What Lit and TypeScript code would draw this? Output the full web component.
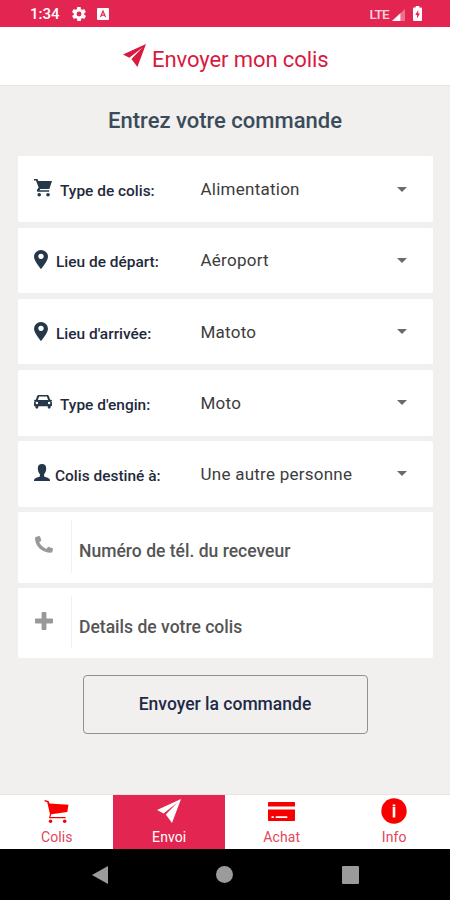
import { LitElement, html, css, svg } from "lit";
import { customElement, property } from "lit/decorators.js";

const plane = svg`<path d="M24 0 0 11l6.600 3.400L20.400 3.600 8.800 15.600 15 24z"/>`;

const icons: Record<string, { box: string; body: unknown }> = {
  plane: { box: "0 0 24 24", body: plane },
  cart: {
    box: "0 0 19 19",
    body: svg`<path d="M0 0h3.600l.9 2H19l-2.800 8.500H6.700l-.9 1.400H16v1.500H4.200c-1.200 0-1.600-1-1-2l1.700-2.500L2.100 1.500H0z"/><circle cx="5.500" cy="16.600" r="1.900"/><circle cx="14.800" cy="16.600" r="1.900"/>`,
  },
  pin: {
    box: "0 0 14 20",
    body: svg`<path fill-rule="evenodd" d="M7 0a7 7 0 0 0-7 7c0 4.600 7 13 7 13s7-8.400 7-13a7 7 0 0 0-7-7zm0 4a2.700 2.700 0 1 1 0 5.400A2.700 2.700 0 0 1 7 4z"/>`,
  },
  car: {
    box: "0 0 19 15",
    body: svg`<path fill-rule="evenodd" d="M5.300 0h8.400c1.300 0 1.900.7 2.300 1.900L17 5h1.500c.7.600.5 1.500-.3 1.500.5.700.8 1.300.8 2.100V11c0 .6-.4 1-1 1h-.5v1.200c0 2-3 2-3 0V12h-10v1.200c0 2-3 2-3 0V12H1c-.6 0-1-.4-1-1V8.600c0-.8.300-1.400.8-2.100C0 6.500-.2 5.600.5 5H2l1-3.100C3.400.7 4 0 5.300 0zm.1 1.700L4.100 5.300h10.800l-1.300-3.600zM3 7.200a1.300 1.300 0 1 0 0 2.600 1.300 1.300 0 0 0 0-2.600zm13 0a1.300 1.300 0 1 0 0 2.600 1.300 1.300 0 0 0 0-2.600z"/>`,
  },
  person: {
    box: "0 0 16 17",
    body: svg`<path d="M8 0c2.700 0 4.200 1.500 4.200 4.300 0 2.600-.8 4.600-2.100 5.900v2.200c2.700.9 5.200 1.600 5.900 3.300V17H0v-1.300c.7-1.700 3.200-2.400 5.900-3.300v-2.200C4.600 8.900 3.800 6.900 3.800 4.300 3.800 1.500 5.300 0 8 0z"/>`,
  },
  phone: {
    box: "0 0 18 18",
    body: svg`<path d="M1.500.7 3.900 0c.5-.1.900.1 1.100.5L6.200 4c.2.500.1.900-.2 1.200L4.200 6.700c1.400 2.900 3.900 5.500 7 7l1.600-1.800c.3-.4.800-.5 1.200-.3l3.500 1.500c.4.200.6.600.5 1.100l-.7 2.400c-.2.700-.7 1.100-1.400 1.100C7 17.700 0 10.600 0 2.300 0 1.400.6.900 1.500.7z"/>`,
  },
  plus: {
    box: "0 0 18 18",
    body: svg`<path d="M7.500 0h3c.6 0 .9.400.9.900v5.700h5.700c.5 0 .9.400.9.900v3c0 .5-.4.900-.9.900h-5.700v5.700c0 .5-.4.900-.9.900h-3c-.5 0-.9-.4-.9-.9v-5.700H.9c-.5 0-.9-.4-.9-.9v-3c0-.5.4-.9.900-.9h5.700V.9c0-.5.4-.9.900-.9z"/>`,
  },
  trolley: {
    box: "0 0 26 24",
    body: svg`<path d="M.8 0 4.800 1 5.800 3.600 25.500 5 24.200 12.500 7.500 14.800l-.8 3h15.800v1.300H5.200l1-4.500L3.400 2.300.3 1.300z"/><circle cx="6.800" cy="22.200" r="1.800"/><circle cx="21.500" cy="22.200" r="1.800"/>`,
  },
  card: {
    box: "0 0 27 19",
    body: svg`<path fill-rule="evenodd" d="M1 0h25c.6 0 1 .4 1 1v3.400H0V1c0-.6.400-1 1-1zM0 7.600h27V18c0 .6-.4 1-1 1H1c-.6 0-1-.4-1-1zm3.500 6.600V16h2.300v-1.800zm4.200 0V16h11.600v-1.800z"/>`,
  },
  info: {
    box: "0 0 26 26",
    body: svg`<circle cx="13" cy="13" r="12.700"/><path fill="#fff" d="M11.700 6.400h2.600v1.900h-2.600zM11.700 9h2.600v10.400h-2.600z"/>`,
  },
  gear: {
    box: "2 2 20 20",
    body: svg`<path d="M19.400 13c0-.3.100-.6.100-1s0-.7-.1-1l2.100-1.600c.2-.2.200-.4.100-.6l-2-3.500c-.1-.2-.4-.3-.6-.2l-2.500 1c-.5-.4-1.100-.7-1.700-1l-.4-2.600c0-.3-.2-.5-.5-.5h-4c-.2 0-.5.200-.5.400l-.4 2.700c-.6.200-1.100.6-1.700 1l-2.500-1c-.2-.1-.5 0-.6.200l-2 3.500c-.1.200-.1.500.1.600L4.600 11c0 .3-.1.600-.1 1s0 .7.100 1l-2.100 1.600c-.2.200-.2.400-.1.600l2 3.500c.1.200.4.300.6.200l2.500-1c.5.400 1.100.7 1.700 1l.4 2.600c0 .2.200.5.500.5h4c.2 0 .5-.2.500-.5l.4-2.600c.6-.3 1.200-.6 1.700-1l2.500 1c.2.100.5 0 .6-.2l2-3.500c.1-.2.100-.5-.1-.6zM12 15.500a3.500 3.500 0 1 1 0-7 3.500 3.500 0 0 1 0 7z"/>`,
  },
  badge: {
    box: "0 0 12 12",
    body: svg`<rect width="12" height="12" rx="1"/><path fill="none" stroke="#e32551" stroke-width="1.200" d="M3.500 9 6 3l2.500 6M4.400 7.200h3.200"/>`,
  },
  signal: {
    box: "0 0 14 13",
    body: svg`<path opacity=".35" d="M14 0v13H0z"/><path d="M9 4.600V13H0z"/>`,
  },
  battery: {
    box: "0 0 10 15",
    body: svg`<path d="M3 0h4v1.500h2c.6 0 1 .4 1 1V14c0 .6-.4 1-1 1H1c-.6 0-1-.4-1-1V2.500c0-.6.400-1 1-1h2z"/><path fill="#e32551" d="M5.800 4 2.500 9h2v3.500L7.700 7.600H5.800z"/>`,
  },
  caret: { box: "0 0 10 5", body: svg`<path d="M0 0h10L5 5z"/>` },
  back: { box: "0 0 16 18", body: svg`<path d="M16 0v18L0 9z"/>` },
  home: { box: "0 0 17 17", body: svg`<circle cx="8.500" cy="8.500" r="8.500"/>` },
  recent: { box: "0 0 18 18", body: svg`<rect width="18" height="18" rx="1"/>` },
};

@customElement("ui-icon")
class UiIcon extends LitElement {
  @property() name = "";
  @property({ type: Number }) w = 16;
  @property({ type: Number }) h = 16;
  static styles = css`
    :host { display: block; flex: none; line-height: 0; }
    svg { display: block; fill: currentColor; }
  `;
  render() {
    const icon = icons[this.name];
    return html`<svg width=${this.w} height=${this.h} viewBox=${icon.box} preserveAspectRatio="none">${icon.body}</svg>`;
  }
}

const choices = [
  { icon: "cart", w: 18, h: 18, cls: "wide cart", label: "Type de colis:", value: "Alimentation" },
  { icon: "pin", w: 14, h: 19, cls: "pin", label: "Lieu de départ:", value: "Aéroport" },
  { icon: "pin", w: 14, h: 19, cls: "pin", label: "Lieu d'arrivée:", value: "Matoto" },
  { icon: "car", w: 18, h: 14, cls: "wide car", label: "Type d'engin:", value: "Moto" },
  { icon: "person", w: 16, h: 17, cls: "person", label: "Colis destiné à:", value: "Une autre personne" },
];

const tabs = [
  { icon: "trolley", w: 25, h: 23, label: "Colis" },
  { icon: "plane", w: 24, h: 24, label: "Envoi", active: true },
  { icon: "card", w: 27, h: 19, label: "Achat" },
  { icon: "info", w: 26, h: 26, label: "Info" },
];

@customElement("app-root")
class AppRoot extends LitElement {
  static styles = css`
    :host {
      display: flex;
      flex-direction: column;
      height: 900px;
      background: #f1f0ee;
      font-family: Roboto, "Liberation Sans", sans-serif;
      overflow: hidden;
      white-space: nowrap;
    }
    * { box-sizing: border-box; }
    .status {
      flex: none;
      height: 27px;
      padding: 0 28px 0 30px;
      display: flex;
      align-items: center;
      background: #e32551;
      color: #fff;
    }
    .clock { font-size: 15px; font-weight: 500; width: 42px; padding-top: 1px; }
    .badge { margin-left: 11px; }
    .lte { margin-left: auto; font-size: 13.500px; font-weight: 500; letter-spacing: -0.700px; opacity: 0.8; padding-top: 1px; }
    .signal { margin: 2px 8px 0 3px; }
    header {
      flex: none;
      height: 58px;
      background: #fff;
      box-shadow: 0 1px 1px #e6e5e3;
      display: flex;
      align-items: flex-start;
      padding: 17px 0 0 123px;
      gap: 6px;
      color: #d81a3f;
    }
    .title { font-size: 22px; line-height: 26px; padding-top: 3px; letter-spacing: -0.080px; }
    h1 {
      flex: none;
      margin: 23px 0 22.400px;
      text-align: center;
      font-size: 22px;
      line-height: 26px;
      font-weight: 500;
      color: #3b4b5a;
    }
    .form { flex: none; display: flex; flex-direction: column; margin: 0 17px 0 18px; gap: 5.600px; }
    .row {
      height: 65.600px;
      border-radius: 2px;
      background: #fff;
      display: grid;
      grid-template-columns: 182.500px 1fr 10px;
      padding: 0 26px 0 0;
      align-items: center;
    }
    .label {
      display: flex;
      align-items: flex-start;
      height: 20px;
      margin-top: 4px;
      padding-left: 16px;
      gap: 8px;
      font-size: 15.450px;
      line-height: 20px;
      font-weight: 500;
      color: #1f2a3c;
    }
    .label ui-icon { color: #24384a; margin-top: -2px; }
    .car ui-icon { margin-top: 0; }
    .person { gap: 5px; }
    .value { font-size: 17px; line-height: 20px; color: #3c3c3c; letter-spacing: 0.250px; }
    .caret { color: #6a6a6a; }
    .entry {
      height: 70.300px;
      border-radius: 2px;
      background: #fff;
      display: flex;
      margin-bottom: -0.600px;
    }
    .lead { width: 54px; margin: 8px 0 10px; border-right: 1px solid #f0f0f0; padding: 16px 0 0 17px; color: #999; }
    .hint { padding: 29px 0 0 7px; font-size: 17.550px; line-height: 20px; font-weight: 500; color: #555; }
    .send {
      flex: none;
      align-self: center;
      width: 285px;
      height: 59px;
      margin-top: 17.500px;
      border: 1.500px solid #8d9296;
      border-radius: 4px;
      background: transparent;
      color: #1f2a48;
      font: 500 17.500px/20px Roboto, sans-serif;
    }
    .tabs {
      flex: none;
      margin-top: auto;
      height: 55px;
      display: grid;
      grid-template-columns: repeat(4, 1fr);
      background: #fff;
      border-top: 1px solid #e8e4e4;
      color: #f90000;
    }
    .tab { display: flex; flex-direction: column; align-items: center; height: 54px; padding-left: 1px; }
    .glyph { height: 34px; padding-bottom: 2px; display: flex; align-items: center; }
    .name { font-size: 14px; line-height: 17px; color: #e2475a; letter-spacing: 0.1px; }
    .active { background: #e32551; color: #fff; }
    .active .name { color: #fff; }
    .system {
      flex: none;
      height: 51px;
      background: #000;
      color: #9b9b9b;
      display: flex;
      justify-content: space-between;
      align-items: center;
      padding: 0 91.500px;
    }
  `;

  render() {
    return html`
      <div class="status">
        <span class="clock">1:34</span>
        <ui-icon name="gear" w="14" h="14"></ui-icon>
        <ui-icon class="badge" name="badge" w="12" h="12"></ui-icon>
        <span class="lte">LTE</span>
        <ui-icon class="signal" name="signal" w="13" h="12"></ui-icon>
        <ui-icon name="battery" w="9" h="15"></ui-icon>
      </div>
      <header>
        <ui-icon name="plane" w="23" h="23"></ui-icon>
        <span class="title">Envoyer mon colis</span>
      </header>
      <h1>Entrez votre commande</h1>
      <div class="form">
        ${choices.map(
          (c) => html`<div class="row">
            <div class="label ${c.cls}"><ui-icon name=${c.icon} w=${c.w} h=${c.h}></ui-icon><span>${c.label}</span></div>
            <span class="value">${c.value}</span>
            <ui-icon class="caret" name="caret" w="10" h="5"></ui-icon>
          </div>`
        )}
        <div class="entry">
          <div class="lead"><ui-icon name="phone" w="18" h="17"></ui-icon></div>
          <span class="hint">Numéro de tél. du receveur</span>
        </div>
        <div class="entry">
          <div class="lead"><ui-icon name="plus" w="18" h="18"></ui-icon></div>
          <span class="hint">Details de votre colis</span>
        </div>
      </div>
      <button class="send">Envoyer la commande</button>
      <nav class="tabs">
        ${tabs.map(
          (t) => html`<div class="tab ${t.active ? "active" : ""}">
            <div class="glyph"><ui-icon name=${t.icon} w=${t.w} h=${t.h}></ui-icon></div>
            <span class="name">${t.label}</span>
          </div>`
        )}
      </nav>
      <div class="system">
        <ui-icon name="back" w="16" h="18"></ui-icon>
        <ui-icon name="home" w="17" h="17"></ui-icon>
        <ui-icon name="recent" w="17" h="18"></ui-icon>
      </div>
    `;
  }
}
